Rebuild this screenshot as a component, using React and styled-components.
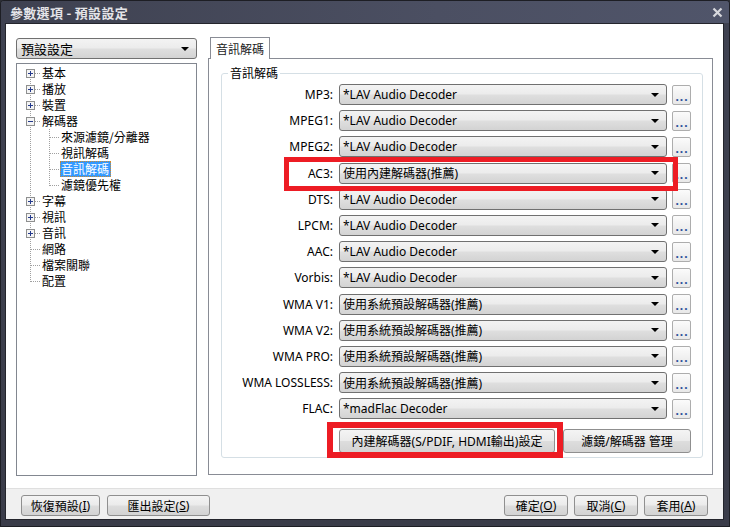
import React from "react";
import styled, { createGlobalStyle } from "styled-components";

const Global = createGlobalStyle`
  html, body { margin: 0; padding: 0; background: #2c2e36; }
  body { font-family: "Noto Sans", "Noto Sans CJK TC", sans-serif; font-size: 12px; color: #000; }
  * { box-sizing: border-box; }
`;

const Window = styled.div`
  position: relative;
  width: 730px;
  height: 527px;
  display: flex;
  flex-direction: column;
  background: linear-gradient(to bottom, #4e5264 0px, #3f4251 23px, #3a3c49 100%);
  border: 1px solid #1d1e24;
  border-radius: 4px 4px 0 0;
  overflow: hidden;
`;

const TitleBar = styled.div`
  height: 22px;
  flex: none;
  display: flex;
  align-items: center;
  justify-content: space-between;
  padding: 0 6px 0 9px;
  color: #e4e4e8;
  font-family: "Noto Sans CJK TC", sans-serif;
  font-weight: 700;
  font-size: 13px;
  letter-spacing: 0.3px;
  background: linear-gradient(to right, #3e4150, #4b4f62 60%, #50556a);
`;

const Client = styled.div`
  flex: 1;
  margin: 0 5px 6px 4px;
  display: flex;
  flex-direction: column;
  background: #fff;
  border: 1px solid #24252c;
`;

const Main = styled.div`
  flex: 1;
  display: flex;
  gap: 11px;
  padding: 14px 10px 12px 10px;
`;

const LeftCol = styled.div`
  width: 181px;
  flex: none;
  display: flex;
  flex-direction: column;
  gap: 4px;
`;

const Combo = styled.div`
  position: relative;
  height: ${(p) => p.$h || 21}px;
  border: 1px solid #707070;
  border-radius: 3px;
  background: linear-gradient(to bottom, #f3f3f3 0%, #ececec 45%, #dedede 55%, #d3d3d3 100%);
  display: flex;
  align-items: center;
  padding: 0 18px 0 ${(p) => p.$pl || 3}px;
  font-size: ${(p) => p.$fs || 12}px;
  white-space: nowrap;
  overflow: hidden;
`;

const ComboCJK = styled.span`
  font-family: "Noto Sans CJK TC", sans-serif;
`;

const Arrow = styled.span`
  position: absolute;
  right: 7px;
  top: 50%;
  margin-top: -2px;
  width: 0;
  height: 0;
  border-left: 4px solid transparent;
  border-right: 4px solid transparent;
  border-top: 4px solid #000;
`;

const Tree = styled.div`
  flex: 1;
  border: 1px solid #828790;
  padding: 1px 0 0 0;
  display: flex;
  flex-direction: column;
`;

const TreeRow = styled.div`
  height: 16px;
  display: flex;
  align-items: center;
  font-family: "Noto Sans CJK TC", sans-serif;
  font-size: 12px;
`;

const TreeLabel = styled.span`
  line-height: 15px;
  height: 16px;
  padding: 0 2px 0 1px;
  margin-left: -1px;
  ${(p) =>
    p.$sel &&
    `background: #3399ff; color: #fff; outline: 1px dotted #d08a2c; outline-offset: -1px;`}
`;

const RightCol = styled.div`
  flex: 1;
  display: flex;
  flex-direction: column;
  margin-top: -1px;
  margin-bottom: 1px;
`;

const TabStrip = styled.div`
  display: flex;
  padding-left: 2px;
  height: 21px;
  position: relative;
  z-index: 1;
`;

const Tab = styled.div`
  height: 22px;
  padding: 0 5px;
  border: 1px solid #898c95;
  border-bottom: none;
  background: #fff;
  display: flex;
  align-items: center;
  font-family: "Noto Sans CJK TC", sans-serif;
  font-size: 12px;
  color: #1b1b1b;
`;

const TabPanel = styled.div`
  flex: 1;
  border: 1px solid #898c95;
  padding: 6px 9px 16px 12px;
  display: flex;
  flex-direction: column;
`;

const Group = styled.fieldset`
  margin: 0;
  flex: 1;
  min-width: 0;
  border: 1px solid #d5dfe5;
  border-radius: 3px;
  padding: 3px 11px 0 0;
  display: flex;
  flex-direction: column;
`;

const Legend = styled.legend`
  margin-left: 6px;
  padding: 0 2px;
  font-family: "Noto Sans CJK TC", sans-serif;
  font-size: 12px;
  line-height: 16px;
`;

const Grid = styled.div`
  display: grid;
  grid-template-columns: 1fr 328px 19px;
  grid-auto-rows: 21px;
  row-gap: 5.2px;
  column-gap: 5px;
  align-items: center;
`;

const RowLabel = styled.div`
  text-align: right;
  padding-right: 1px;
  white-space: nowrap;
  font-size: 12px;
`;

const DotsBtn = styled.div`
  height: 20px;
  border: 1px solid #adadad;
  border-radius: 2px;
  background: linear-gradient(to bottom, #fbfbfb, #e8e8e8);
  color: #2a4f9a;
  font-size: 12px;
  font-weight: 700;
  display: flex;
  align-items: flex-end;
  justify-content: center;
  line-height: 14px;
  letter-spacing: 1px;
  padding-left: 1px;
`;

const ActionRow = styled.div`
  display: flex;
  justify-content: flex-end;
  gap: 8px;
  margin-top: 10px;
`;

const Button = styled.div`
  width: ${(p) => p.$w}px;
  height: ${(p) => p.$h || 21}px;
  border: 1px solid #8f8f8f;
  border-radius: 3px;
  background: linear-gradient(to bottom, #f4f4f4 0%, #ebebeb 48%, #dddddd 52%, #d3d3d3 100%);
  display: flex;
  align-items: center;
  justify-content: center;
  font-family: "Noto Sans", "Noto Sans CJK TC", sans-serif;
  font-size: 12px;
  white-space: nowrap;
  u { text-decoration: underline; text-underline-offset: 1px; }
`;

const Footer = styled.div`
  height: 31px;
  flex: none;
  background: #f0f0f0;
  border-top: 1px solid #dfdfdf;
  display: flex;
  justify-content: space-between;
  padding: 6px 15px 0 15px;
`;

const BtnGroup = styled.div`
  display: flex;
  gap: ${(p) => p.$gap}px;
`;

const Highlight = styled.div`
  position: absolute;
  left: ${(p) => p.$x}px;
  top: ${(p) => p.$y}px;
  width: ${(p) => p.$w}px;
  height: ${(p) => p.$h}px;
  border: ${(p) => p.$t}px solid #ed1c24;
  pointer-events: none;
`;

function Connector({ level, exp, first, last, childLast }) {
  const dot = { stroke: "#a0a0a0", strokeWidth: 1, strokeDasharray: "1 1" };
  if (level === 0) {
    return (
      <svg width="25" height="16" style={{ flex: "none" }}>
        <line x1="13.5" y1={first ? 8 : 0} x2="13.5" y2={last ? 9 : 16} {...dot} />
        <line x1="14" y1="8.5" x2="24" y2="8.5" {...dot} />
        {exp && (
          <g>
            <rect x="9.5" y="4.5" width="8" height="8" fill="#f4f4f4" stroke="#8e8f8f" />
            <line x1="11" y1="8.5" x2="16" y2="8.5" stroke="#243a8c" />
            {exp === "plus" && <line x1="13.5" y1="6" x2="13.5" y2="11" stroke="#243a8c" />}
          </g>
        )}
      </svg>
    );
  }
  return (
    <svg width="44" height="16" style={{ flex: "none" }}>
      <line x1="13.5" y1="0" x2="13.5" y2="16" {...dot} />
      <line x1="32.5" y1="0" x2="32.5" y2={childLast ? 9 : 16} {...dot} />
      <line x1="33" y1="8.5" x2="43" y2="8.5" {...dot} />
    </svg>
  );
}

const treeItems = [
  { t: "基本", exp: "plus" },
  { t: "播放", exp: "plus" },
  { t: "裝置", exp: "plus" },
  { t: "解碼器", exp: "minus" },
  { t: "來源濾鏡/分離器", level: 1 },
  { t: "視訊解碼", level: 1 },
  { t: "音訊解碼", level: 1, sel: true },
  { t: "濾鏡優先權", level: 1, childLast: true },
  { t: "字幕", exp: "plus" },
  { t: "視訊", exp: "plus" },
  { t: "音訊", exp: "plus" },
  { t: "網路" },
  { t: "檔案關聯" },
  { t: "配置" },
];

const LAV = "*LAV Audio Decoder";
const SYS = "使用系統預設解碼器(推薦)";
const rows = [
  ["MP3:", LAV],
  ["MPEG1:", LAV],
  ["MPEG2:", LAV],
  ["AC3:", "使用內建解碼器(推薦)"],
  ["DTS:", LAV],
  ["LPCM:", LAV],
  ["AAC:", LAV],
  ["Vorbis:", LAV],
  ["WMA V1:", SYS],
  ["WMA V2:", SYS],
  ["WMA PRO:", SYS],
  ["WMA LOSSLESS:", SYS],
  ["FLAC:", "*madFlac Decoder"],
];

export default function App() {
  return (
    <>
      <Global />
      <Window>
        <TitleBar>
          <span>參數選項 - 預設設定</span>
          <svg width="11" height="11" viewBox="0 0 11 11">
            <path d="M1.5 1.5 L9.5 9.5 M9.5 1.5 L1.5 9.5" stroke="#d8d9de" strokeWidth="2.2" />
          </svg>
        </TitleBar>
        <Client>
          <Main>
            <LeftCol>
              <Combo $pl={4} $fs={13}>
                <ComboCJK>預設設定</ComboCJK>
                <Arrow />
              </Combo>
              <Tree>
                {treeItems.map((it, i) => (
                  <TreeRow key={i}>
                    <Connector
                      level={it.level || 0}
                      exp={it.exp}
                      first={i === 0}
                      last={i === treeItems.length - 1}
                      childLast={it.childLast}
                    />
                    <TreeLabel $sel={it.sel}>{it.t}</TreeLabel>
                  </TreeRow>
                ))}
              </Tree>
            </LeftCol>
            <RightCol>
              <TabStrip>
                <Tab>音訊解碼</Tab>
              </TabStrip>
              <TabPanel>
                <Group>
                  <Legend>音訊解碼</Legend>
                  <Grid>
                    {rows.map(([l, v]) => (
                      <React.Fragment key={l}>
                        <RowLabel>{l}</RowLabel>
                        <Combo>
                          <span>{v}</span>
                          <Arrow />
                        </Combo>
                        <DotsBtn>...</DotsBtn>
                      </React.Fragment>
                    ))}
                  </Grid>
                  <ActionRow>
                    <Button $w={216} $h={24}>內建解碼器(S/PDIF, HDMI輸出)設定</Button>
                    <Button $w={128} $h={24}>濾鏡/解碼器 管理</Button>
                  </ActionRow>
                </Group>
              </TabPanel>
            </RightCol>
          </Main>
          <Footer>
            <BtnGroup $gap={7}>
              <Button $w={79}>恢復預設(<u>I</u>)</Button>
              <Button $w={103}>匯出設定(<u>S</u>)</Button>
            </BtnGroup>
            <BtnGroup $gap={6}>
              <Button $w={64}>確定(<u>O</u>)</Button>
              <Button $w={64}>取消(<u>C</u>)</Button>
              <Button $w={64}>套用(<u>A</u>)</Button>
            </BtnGroup>
          </Footer>
        </Client>
        <Highlight $x={283} $y={156} $w={394} $h={34} $t={5} />
        <Highlight $x={326} $y={421} $w={236} $h={36} $t={6} />
      </Window>
    </>
  );
}
